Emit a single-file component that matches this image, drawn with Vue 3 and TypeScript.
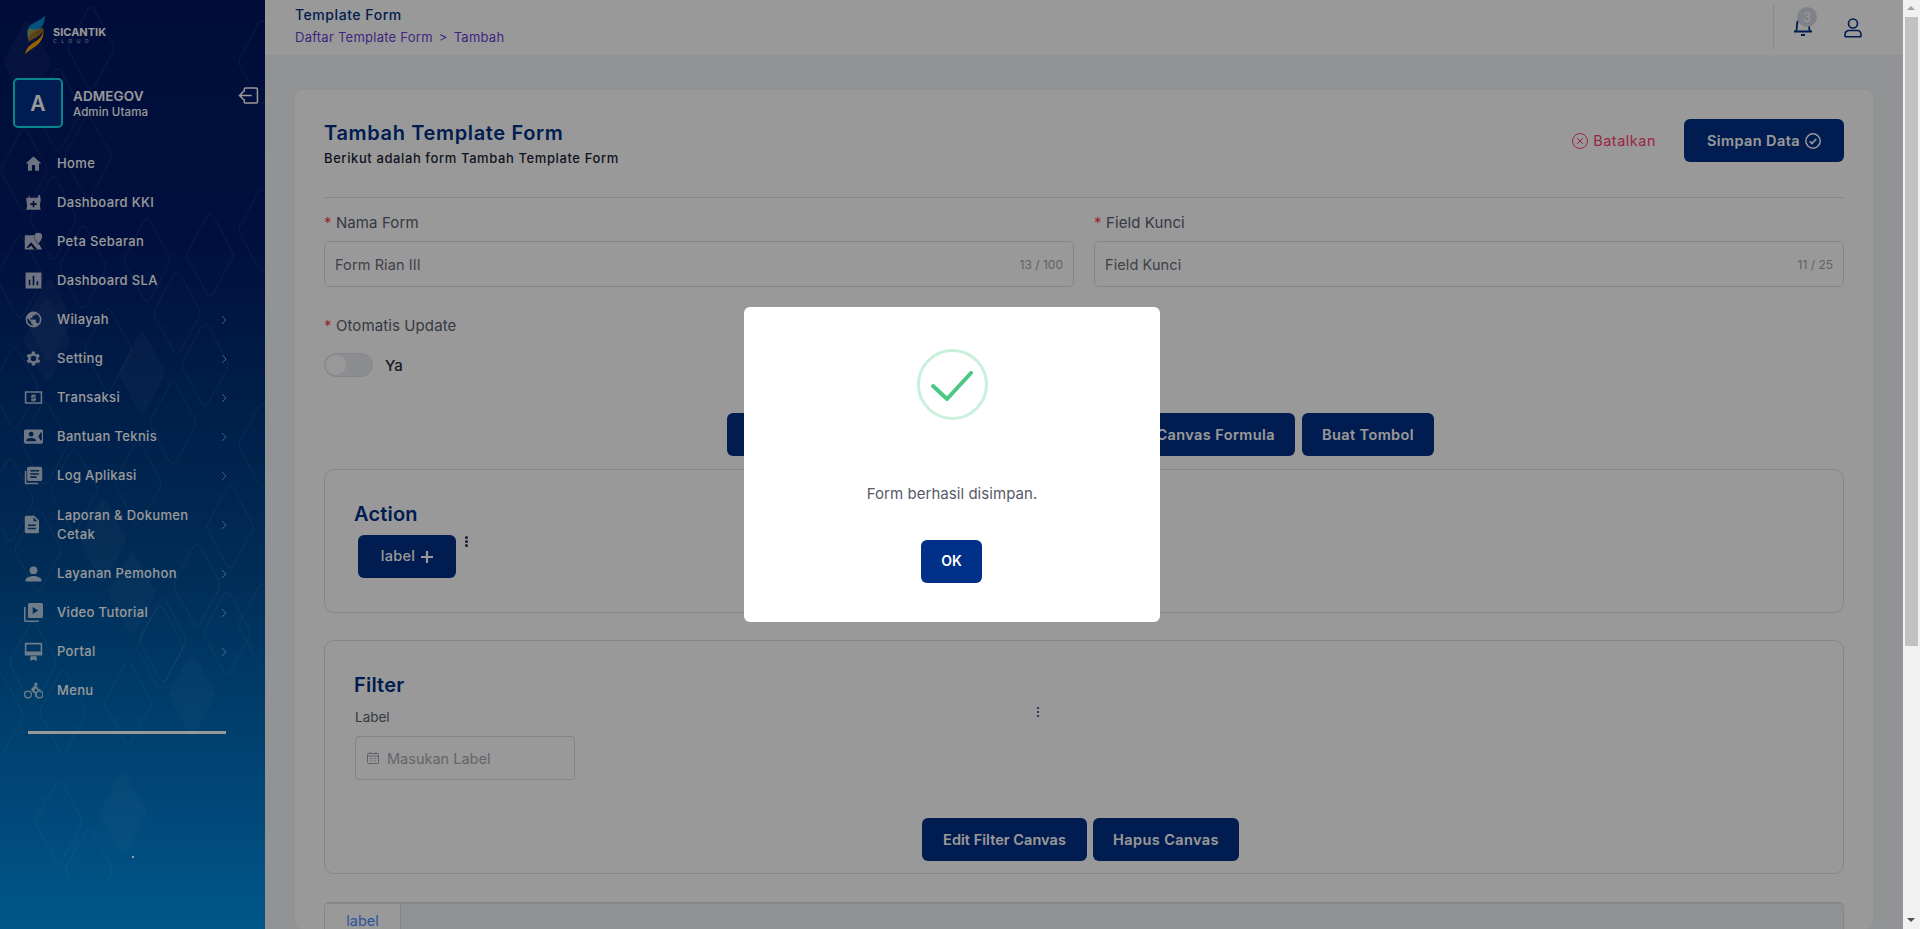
<script setup lang="ts">
interface MenuItem {
  label: string;
  icon: string;
  arrow?: boolean;
}

const menu: MenuItem[] = [
  { label: "Home", icon: "home" },
  { label: "Dashboard KKI", icon: "kki" },
  { label: "Peta Sebaran", icon: "map" },
  { label: "Dashboard SLA", icon: "chart" },
  { label: "Wilayah", icon: "globe", arrow: true },
  { label: "Setting", icon: "gear", arrow: true },
  { label: "Transaksi", icon: "money", arrow: true },
  { label: "Bantuan Teknis", icon: "contact", arrow: true },
  { label: "Log Aplikasi", icon: "news", arrow: true },
  { label: "Laporan & Dokumen Cetak", icon: "doc", arrow: true },
  { label: "Layanan Pemohon", icon: "person", arrow: true },
  { label: "Video Tutorial", icon: "video", arrow: true },
  { label: "Portal", icon: "monitor", arrow: true },
  { label: "Menu", icon: "bike" },
];

// pola belah ketupat di sidebar: [x tengah, y tengah, isi]
const diamonds: [number, number, boolean][] = [
  [91, 48, false], [27, 62, true], [58, 110, false], [88, 157, false], [24, 170, false],
  [53, 218, false], [210, 255, false], [147, 260, false], [83, 267, false], [20, 277, false],
  [177, 313, false], [49, 320, true], [47, 340, true], [142, 373, true], [205, 365, false],
  [15, 388, false], [173, 423, false], [45, 443, false], [108, 350, false], [74, 490, false],
  [138, 483, false], [10, 500, false], [230, 527, false], [103, 540, true], [38, 550, false],
  [197, 585, false], [132, 593, true], [163, 640, false], [227, 633, false], [33, 663, false],
  [128, 703, false], [63, 712, false], [192, 695, true], [160, 647, false], [0, 715, false],
  [59, 822, false], [123, 813, true], [89, 870, false], [262, 62, false], [262, 230, false],
  [262, 445, false], [262, 625, false],
];

function diamondPath(cx: number, cy: number): string {
  return `M${cx - 3} ${cy - 39}Q${cx} ${cy - 43} ${cx + 3} ${cy - 39}L${cx + 22} ${cy - 4}Q${cx + 24} ${cy} ${cx + 22} ${cy + 4}L${cx + 3} ${cy + 39}Q${cx} ${cy + 43} ${cx - 3} ${cy + 39}L${cx - 22} ${cy + 4}Q${cx - 24} ${cy} ${cx - 22} ${cy - 4}Z`;
}
</script>

<template>
  <div class="page">
    <aside class="sidebar">
      <svg class="pattern" width="265" height="880" viewBox="0 0 265 880">
        <path
          v-for="(d, i) in diamonds"
          :key="i"
          :d="diamondPath(d[0], d[1])"
          :fill="d[2] ? 'rgba(255,255,255,0.04)' : 'none'"
          :stroke="d[2] ? 'none' : 'rgba(255,255,255,0.09)'"
        />
      </svg>

      <div class="logo">
        <svg width="21" height="40" viewBox="0 0 22 41">
          <path d="M21 0C17 5 8 7 4 12C1 16 2 21 4 25C4 20 8 18 14 15C19 12 21 6 21 0Z" fill="#0a87c9" />
          <path d="M19 14C19 19 18 22 13 26C9 29 2 31 0 41C4 36 10 34 14 30C19 25 20 19 19 14Z" fill="#f7a600" />
          <path d="M5 13C9 17 13 14 19 13C20 17 17 20 12 23C8 25 5 26 4 28C3 23 2 18 5 13Z" fill="#f7a600" opacity="0.6" />
        </svg>
        <div class="logo-text">
          <div class="logo-name">SICANTIK</div>
          <div class="logo-sub">CLOUD</div>
        </div>
      </div>

      <div class="user">
        <div class="avatar">A</div>
        <div class="user-info">
          <div class="user-name">ADMEGOV</div>
          <div class="user-role">Admin Utama</div>
        </div>
        <svg class="logout" width="22" height="17" viewBox="0 0 22 18" fill="none" stroke="#fff" stroke-width="1.6">
          <path d="M7 5V2.5A1.5 1.5 0 0 1 8.5 1H19.5A1.5 1.5 0 0 1 21 2.500V15.500A1.500 1.500 0 0 1 19.500 17H8.500A1.500 1.500 0 0 1 7 15.500V13" />
          <path d="M15 9H2M6.500 4.500L2 9L6.500 13.500" />
        </svg>
      </div>

      <nav class="menu">
        <div v-for="item in menu" :key="item.label" class="menu-item">
          <svg class="menu-icon" width="20" height="20" viewBox="0 0 24 24" fill="#fff">
            <path v-if="item.icon === 'home'" d="M10 21v-7h4v7h5v-9h3L12 3 2 12h3v9z" />
            <template v-else-if="item.icon === 'kki'">
              <path d="M3 6h3V3h1v3h10l2-4 1.500 1L20 6h1v4l-1 5 1 6H3l1-6-1-5z" />
              <path d="M11 10h2v3h3v2h-3v3h-2v-3H8v-2h3z" fill="#00124a" />
            </template>
            <template v-else-if="item.icon === 'map'">
              <path d="M1 4h12v3c0 3 3 6 5 9l1-1 4 7H1z" />
              <path d="M18 1a5 5 0 0 1 5 5c0 3-3 6-5 9-2-3-5-6-5-9a5 5 0 0 1 5-5z" />
              <path d="M3 20l6-7 8 9H13l-4-5-3 3z" fill="#00124a" />
            </template>
            <path v-else-if="item.icon === 'chart'" fill-rule="evenodd" d="M2 2h20v20H2zM6 11v7h2v-7zM11 6v12h2V6zM16 13v5h2v-5z" />
            <path v-else-if="item.icon === 'globe'" fill-rule="evenodd" d="M12 2a10 10 0 1 0 0 20 10 10 0 0 0 0-20zM11 19.900A8 8 0 0 1 4.200 10.200L9 15v1a2 2 0 0 0 2 2zM17.900 17.400A2 2 0 0 0 16 16h-1v-3a1 1 0 0 0-1-1H8v-2h2a1 1 0 0 0 1-1V7h2a2 2 0 0 0 2-2v-.4a8 8 0 0 1 2.900 12.800z" />
            <path v-else-if="item.icon === 'gear'" fill-rule="evenodd" d="M19.400 13a7.500 7.500 0 0 0 0-2l2.100-1.600-2-3.500-2.500 1a7.500 7.500 0 0 0-1.700-1L15.500 3.200h-4L11 5.900a7.500 7.500 0 0 0-1.700 1l-2.500-1-2 3.500L6.900 11a7.500 7.500 0 0 0 0 2l-2.100 1.600 2 3.500 2.500-1a7.500 7.500 0 0 0 1.700 1l.5 2.700h4l.5-2.700a7.500 7.500 0 0 0 1.700-1l2.500 1 2-3.500zM13.500 15.500a3.500 3.500 0 1 1 0-7 3.500 3.500 0 0 1 0 7z" transform="translate(-1.500 0)" />
            <path v-else-if="item.icon === 'money'" fill-rule="evenodd" d="M1 4h22v16H1zM3 6v12h18V6zM11 8h2v1h2v2h-4v1h3a1 1 0 0 1 1 1v2a1 1 0 0 1-1 1h-1v1h-2v-1H9v-2h4v-1h-3a1 1 0 0 1-1-1v-2a1 1 0 0 1 1-1h1z" />
            <path v-else-if="item.icon === 'contact'" fill-rule="evenodd" d="M2 3h20a2 2 0 0 1 2 2v14a2 2 0 0 1-2 2H2a2 2 0 0 1-2-2V5a2 2 0 0 1 2-2zM9 6a3 3 0 1 0 0 6 3 3 0 0 0 0-6zM3 18h12v-1c0-2-4-3-6-3s-6 1-6 3zM21 7l-3 5 3 5h1.500V7z" />
            <template v-else-if="item.icon === 'news'">
              <path fill-rule="evenodd" d="M6 1h15a2 2 0 0 1 2 2v14a2 2 0 0 1-2 2H6a2 2 0 0 1-2-2V3a2 2 0 0 1 2-2zM8 5v2h11V5zM8 9v2h11V9zM8 13v2h8v-2z" />
              <path d="M1 6h2v15h15v2H3a2 2 0 0 1-2-2z" />
            </template>
            <path v-else-if="item.icon === 'doc'" fill-rule="evenodd" d="M6 1h9l6 6v14a2 2 0 0 1-2 2H5a2 2 0 0 1-2-2V3a2 2 0 0 1 2-2zM7 12v2h10v-2zM7 16v2h10v-2zM14 3v5h5z" transform="translate(-2 0)" />
            <path v-else-if="item.icon === 'person'" d="M12 3a5 5 0 1 1 0 10 5 5 0 0 1 0-10zM12 15c4 0 10 2 10 5v2H2v-2c0-3 6-5 10-5z" />
            <template v-else-if="item.icon === 'video'">
              <path fill-rule="evenodd" d="M7 0h15a2 2 0 0 1 2 2v15a2 2 0 0 1-2 2H7a2 2 0 0 1-2-2V2a2 2 0 0 1 2-2zM11 5v9l7-4.500z" />
              <path d="M0 5h2v17h17v2H2a2 2 0 0 1-2-2z" />
            </template>
            <template v-else-if="item.icon === 'monitor'">
              <path fill-rule="evenodd" d="M1 1h22v16H1zM3 3v9h18V3z" />
              <path d="M8 18h8v6l-4-2-4 2z" />
            </template>
            <template v-else-if="item.icon === 'bike'">
              <circle cx="15" cy="4" r="2" />
              <path d="M9 10l4-4h3l2 4h3v2h-4l-2-3-2 3 3 3v5h-2v-4l-4-3z" />
              <circle cx="5" cy="17" r="4.300" fill="none" stroke="#fff" stroke-width="1.600" />
              <circle cx="19.500" cy="17" r="4.300" fill="none" stroke="#fff" stroke-width="1.600" />
            </template>
          </svg>
          <span class="menu-label">{{ item.label }}</span>
          <svg v-if="item.arrow" class="menu-arrow" width="6" height="10" viewBox="0 0 6 10" fill="none" stroke="#fff" stroke-width="1">
            <path d="M1 1l4 4-4 4" />
          </svg>
        </div>
      </nav>
      <div class="side-line"></div>
      <div class="side-dot"></div>
    </aside>

    <div class="main">
      <header class="topbar">
        <div class="crumbs">
          <div class="crumb-title">Template Form</div>
          <div class="crumb-path">Daftar Template Form<span class="sep">&gt;</span>Tambah</div>
        </div>
        <div class="top-actions">
          <div class="bell">
            <svg width="20" height="24" viewBox="0 0 20 24" fill="none" stroke="#003087" stroke-width="1.800">
              <path d="M1 18.500h18M3 18.500c1-2 1-4 1-7a6 6 0 0 1 12 0c0 3 0 5 1 7" />
              <path d="M8 22h4" stroke-width="2" />
            </svg>
            <span class="badge">3</span>
          </div>
          <svg width="18" height="20" viewBox="0 0 18 20" fill="none" stroke="#003087" stroke-width="1.600">
            <circle cx="9" cy="5.500" r="4.500" />
            <path d="M1 18v-1.500a4 4 0 0 1 4-4h8a4 4 0 0 1 4 4V18a.8.8 0 0 1-.8.8H1.800A.8.8 0 0 1 1 18z" />
          </svg>
        </div>
      </header>

      <main class="content">
        <section class="card">
          <div class="card-head">
            <div>
              <h1 class="card-title">Tambah Template Form</h1>
              <div class="card-sub">Berikut adalah form Tambah Template Form</div>
            </div>
            <div class="head-actions">
              <span class="cancel">
                <svg width="16" height="16" viewBox="0 0 16 16" fill="none" stroke="#ff3d71" stroke-width="1">
                  <circle cx="8" cy="8" r="7.500" />
                  <path d="M5 5l6 6M11 5l-6 6" />
                </svg>
                Batalkan
              </span>
              <button class="btn btn-save">
                Simpan Data
                <svg width="16" height="16" viewBox="0 0 16 16" fill="none" stroke="#fff" stroke-width="1.500">
                  <circle cx="8" cy="8" r="7.200" />
                  <path d="M4.800 8.300l2.200 2.200 4.200-4.500" stroke-width="1.700" />
                </svg>
              </button>
            </div>
          </div>

          <div class="form-grid">
            <div class="field">
              <label class="label"><i>*</i> Nama Form</label>
              <div class="input">
                <span class="value">Form Rian III</span>
                <span class="count">13 / 100</span>
              </div>
            </div>
            <div class="field">
              <label class="label"><i>*</i> Field Kunci</label>
              <div class="input">
                <span class="value">Field Kunci</span>
                <span class="count">11 / 25</span>
              </div>
            </div>
          </div>

          <div class="field auto">
            <label class="label"><i>*</i> Otomatis Update</label>
            <div class="switch-row">
              <span class="switch"><span class="knob"></span></span>
              <span class="switch-text">Ya</span>
            </div>
          </div>

          <div class="canvas-btns">
            <button class="btn w-form">Edit Canvas Form</button>
            <button class="btn w-action">Edit Action Canvas</button>
            <button class="btn w-formula">Edit Canvas Formula</button>
            <button class="btn w-tombol">Buat Tombol</button>
          </div>

          <div class="panel panel-action">
            <h2 class="panel-title">Action</h2>
            <div class="action-row">
              <button class="btn btn-label">
                <span class="label-text">label</span>
                <svg width="12" height="12" viewBox="0 0 12 12" stroke="#fff" stroke-width="2.200"><path d="M6 0v12M0 6h12" /></svg>
              </button>
              <span class="dots"><b></b><b></b><b></b></span>
            </div>
          </div>

          <div class="panel panel-filter">
            <h2 class="panel-title">Filter</h2>
            <div class="filter-row">
              <div class="filter-field">
                <div class="filter-label">Label</div>
                <div class="date-input">
                  <svg width="12" height="12" viewBox="0 0 12 12" fill="none" stroke="#8a8f9c" stroke-width="0.800">
                    <rect x="0.500" y="1.500" width="11" height="10" rx="1" />
                    <path d="M0.500 4h11M3 0v2M9 0v2M3 6.500h1M5.500 6.500h1M8 6.500h1M3 8.800h1M5.500 8.800h1M8 8.800h1" />
                  </svg>
                  Masukan Label
                </div>
              </div>
              <span class="dots dots-small"><b></b><b></b><b></b></span>
            </div>
            <div class="filter-btns">
              <button class="btn w-filter">Edit Filter Canvas</button>
              <button class="btn w-hapus">Hapus Canvas</button>
            </div>
          </div>

          <div class="tabs">
            <span class="tab">label</span>
          </div>
        </section>
      </main>
    </div>

    <div class="overlay">
      <div class="dialog">
        <div class="success">
          <svg width="42" height="30" viewBox="0 0 42 30" fill="none" stroke="#4cc784" stroke-width="4" stroke-linecap="round" stroke-linejoin="round">
            <path d="M2 15l14 13L40 2" />
          </svg>
        </div>
        <div class="dialog-text">Form berhasil disimpan.</div>
        <button class="btn-ok">OK</button>
      </div>
    </div>

    <div class="scrollbar">
      <span class="sb-up"></span>
      <span class="sb-thumb"></span>
      <span class="sb-down"></span>
    </div>
  </div>
</template>

<style>
html,
body {
  margin: 0;
  overflow: hidden;
}
</style>

<style scoped>
.page {
  display: flex;
  width: 1920px;
  height: 929px;
  overflow: hidden;
  position: relative;
  font-family: Inter, "Liberation Sans", sans-serif;
  background: #f2f5f7;
}
.sidebar {
  width: 265px;
  flex: none;
  height: 929px;
  position: relative;
  box-sizing: border-box;
  padding: 14px 0 0 13px;
  background: linear-gradient(180deg, #001762 0%, #001a66 25%, #00498f 60%, #0091e6 100%);
  color: #fff;
}
.pattern {
  position: absolute;
  left: 0;
  top: 0;
}
.logo {
  display: flex;
  align-items: center;
  gap: 7px;
  margin-left: 12px;
  height: 41px;
  position: relative;
}
.logo-text {
  margin-top: 1px;
}
.logo-name {
  font-size: 11px;
  font-weight: 700;
  line-height: 12px;
}
.logo-sub {
  font-size: 5px;
  letter-spacing: 4.500px;
  line-height: 7px;
  opacity: 0.7;
}
.user {
  display: flex;
  align-items: center;
  margin-top: 23px;
  position: relative;
}
.avatar {
  width: 46px;
  height: 46px;
  border: 2px solid #10e0e8;
  border-radius: 5px;
  background: #003087;
  display: flex;
  align-items: center;
  justify-content: center;
  font-size: 21px;
  font-weight: 600;
}
.user-info {
  margin-left: 10px;
  flex: 1;
}
.user-name {
  font-size: 13.500px;
  font-weight: 600;
  line-height: 17px;
  letter-spacing: 0.1px;
}
.user-role {
  font-size: 11.500px;
  font-weight: 500;
  line-height: 14px;
  letter-spacing: 0.1px;
}
.logout {
  position: absolute;
  left: 224px;
  top: 9px;
}
.menu {
  margin-top: 16px;
  position: relative;
}
.menu-item {
  display: flex;
  align-items: center;
  min-height: 39px;
  padding-left: 11px;
  box-sizing: border-box;
}
.menu-item:nth-child(10) {
  min-height: 59px;
}
.menu-icon {
  flex: none;
  opacity: 0.72;
  width: 19px;
  height: 19px;
}
.menu-label {
  margin-left: 14px;
  width: 145px;
  font-size: 13px;
  font-weight: 500;
  line-height: 19px;
  letter-spacing: 0.35px;
}
.menu-arrow {
  position: absolute;
  left: 208px;
  opacity: 0.5;
}
.side-line {
  position: absolute;
  left: 28px;
  top: 731px;
  width: 198px;
  height: 3px;
  background: #fff;
}
.side-dot {
  position: absolute;
  left: 132px;
  top: 856px;
  width: 2px;
  height: 2px;
  background: #fff;
}
.main {
  width: 1638px;
  flex: none;
}
.topbar {
  height: 55px;
  background: #fff;
  display: flex;
  justify-content: space-between;
  box-sizing: border-box;
  padding: 6px 0 0 30px;
}
.crumb-title {
  font-size: 14px;
  font-weight: 500;
  color: #003087;
  line-height: 18px;
  letter-spacing: 0.55px;
}
.crumb-path {
  font-size: 13px;
  color: #6a3fd6;
  line-height: 18px;
  margin-top: 4px;
  letter-spacing: 0.25px;
}
.sep {
  margin: 0 6px;
}
.top-actions {
  display: flex;
  align-items: center;
  gap: 31px;
  height: 45px;
  margin-top: -1px;
  padding: 0 41px 0 19px;
  border-left: 1px solid #e2e4e8;
}
.bell {
  position: relative;
  width: 20px;
  height: 24px;
  margin-top: -5px;
}
.badge {
  position: absolute;
  left: 4px;
  top: -6px;
  width: 20px;
  height: 20px;
  border-radius: 50%;
  background: #d5d9e4;
  color: #fff;
  font-size: 13px;
  text-align: center;
  line-height: 20px;
}
.content {
  padding: 35px 30px 0;
}
.card {
  background: #fff;
  border-radius: 8px;
  padding: 29px 29px 0;
  height: 839px;
  box-sizing: border-box;
  box-shadow: 0 0 12px rgba(0, 0, 0, 0.02);
}
.card-head {
  display: flex;
  justify-content: space-between;
  padding-bottom: 30px;
  border-bottom: 1px solid #dcdfe4;
}
.card-title {
  margin: 0;
  font-size: 20px;
  font-weight: 600;
  color: #003087;
  line-height: 28px;
  letter-spacing: 0.65px;
}
.card-sub {
  font-size: 13px;
  font-weight: 500;
  color: #1a1f36;
  line-height: 18px;
  margin-top: 2px;
  letter-spacing: 0.6px;
}
.head-actions {
  display: flex;
  align-items: flex-start;
  gap: 28px;
}
.cancel {
  display: flex;
  align-items: center;
  gap: 5px;
  height: 43px;
  color: #ff3d71;
  font-size: 14.500px;
  font-weight: 400;
  letter-spacing: 0.5px;
}
.btn {
  height: 43px;
  box-sizing: border-box;
  border: none;
  border-radius: 6px;
  background: #003087;
  color: #fff;
  font-family: inherit;
  font-size: 14.500px;
  font-weight: 600;
  letter-spacing: 0.4px;
  padding: 0;
  display: inline-flex;
  align-items: center;
  justify-content: center;
  flex: none;
}
.btn-save {
  width: 160px;
  gap: 5px;
}
.form-grid {
  display: grid;
  grid-template-columns: 1fr 1fr;
  gap: 20px;
  margin-top: 14px;
}
.label {
  display: block;
  font-size: 15px;
  color: #5a6070;
  line-height: 21px;
  margin-bottom: 8px;
  letter-spacing: 0.1px;
}
.label i {
  font-style: normal;
  color: #ff3d3d;
}
.input {
  height: 46px;
  box-sizing: border-box;
  border: 1px solid #d8dbe2;
  border-radius: 5px;
  display: flex;
  align-items: center;
  justify-content: space-between;
  padding: 0 10px;
}
.value {
  font-size: 14.500px;
  color: #6a6f7c;
  letter-spacing: 0.1px;
}
.count {
  font-size: 12px;
  color: #a0a4ae;
}
.auto {
  margin-top: 28px;
}
.switch-row {
  display: flex;
  align-items: center;
  gap: 12px;
  padding-top: 9px;
}
.switch {
  width: 49px;
  height: 24px;
  box-sizing: border-box;
  border-radius: 12px;
  background: #e8ebf2;
  border: 1px solid #e0e2e8;
  padding: 1px;
}
.knob {
  display: block;
  width: 20px;
  height: 20px;
  border-radius: 50%;
  background: #fff;
}
.switch-text {
  font-size: 15px;
  font-weight: 500;
  color: #2a2f3c;
}
.canvas-btns {
  display: flex;
  justify-content: center;
  gap: 7px;
  margin-top: 36px;
  padding-right: 7px;
}
.w-form {
  width: 175px;
}
.w-action {
  width: 188px;
}
.w-formula {
  width: 191px;
}
.w-tombol {
  width: 132px;
}
.panel {
  border: 1px solid #dcdfe4;
  border-radius: 10px;
  box-sizing: border-box;
  padding: 30px 29px 0;
}
.panel-action {
  height: 144px;
  margin-top: 13px;
}
.panel-title {
  margin: 0;
  font-size: 20px;
  font-weight: 600;
  color: #003087;
  line-height: 28px;
  letter-spacing: 0.2px;
}
.action-row {
  display: flex;
  align-items: flex-start;
  margin: 7px 0 0 4px;
}
.btn-label {
  width: 98px;
  gap: 6px;
  font-size: 14.500px;
  font-weight: 500;
  letter-spacing: 0.3px;
}
.label-text {
  margin-bottom: 3px;
}
.dots {
  display: flex;
  flex-direction: column;
  gap: 1px;
  margin: 1px 0 0 9px;
}
.dots b {
  width: 3px;
  height: 3px;
  border-radius: 50%;
  background: #2a2f4c;
}
.panel-filter {
  height: 234px;
  margin-top: 27px;
}
.filter-row {
  display: flex;
  align-items: flex-start;
  height: 119px;
}
.filter-field {
  margin-left: 1px;
  flex: none;
}
.filter-label {
  font-size: 13.500px;
  color: #5a6070;
  line-height: 20px;
  margin-top: 8px;
}
.date-input {
  width: 220px;
  height: 44px;
  box-sizing: border-box;
  margin-top: 9px;
  border: 1px solid #d8dbe2;
  border-radius: 4px;
  display: flex;
  align-items: center;
  gap: 8px;
  padding-left: 11px;
  font-size: 14.500px;
  color: #a6aab4;
}
.dots-small {
  margin: 8px 0 0 462px;
  gap: 2px;
}
.dots-small b {
  width: 2px;
  height: 2px;
  background: #003087;
}
.filter-btns {
  display: flex;
  justify-content: center;
  gap: 6px;
  padding-right: 7px;
}
.w-filter {
  width: 165px;
  letter-spacing: 0.05px;
}
.w-hapus {
  width: 146px;
}
.tabs {
  margin-top: 28px;
  height: 27px;
  box-sizing: border-box;
  background: #f2f3f6;
  border: 1px solid #dcdfe4;
  border-top-width: 2px;
  border-bottom: none;
  border-radius: 5px 5px 0 0;
}
.tab {
  display: block;
  width: 76px;
  height: 25px;
  box-sizing: border-box;
  padding-top: 9px;
  text-align: center;
  background: #fff;
  border-right: 1px solid #dcdfe4;
  color: #4a8eff;
  font-size: 14.500px;
  line-height: 16px;
}
.overlay {
  position: absolute;
  left: 0;
  top: 0;
  width: 1903px;
  height: 929px;
  background: rgba(0, 0, 0, 0.4);
}
.dialog {
  position: absolute;
  left: 744px;
  top: 307px;
  width: 416px;
  height: 315px;
  background: #fff;
  border-radius: 6px;
  display: flex;
  flex-direction: column;
  align-items: center;
}
.success {
  width: 71px;
  height: 71px;
  margin-top: 42px;
  box-sizing: border-box;
  border: 3px solid #c9f0dc;
  border-radius: 50%;
  display: flex;
  align-items: center;
  justify-content: center;
  padding-top: 3px;
}
.dialog-text {
  margin-top: 64px;
  font-size: 15px;
  color: #595968;
  line-height: 20px;
  letter-spacing: 0.05px;
}
.btn-ok {
  margin: 36px 1px 0 0;
  width: 61px;
  height: 43px;
  border: none;
  border-radius: 6px;
  background: #003087;
  color: #fff;
  font-family: inherit;
  font-size: 14px;
  font-weight: 600;
  padding-bottom: 3px;
}
.scrollbar {
  position: absolute;
  right: 0;
  top: 0;
  width: 17px;
  height: 929px;
  background: #f1f1f1;
  display: flex;
  flex-direction: column;
}
.sb-up,
.sb-down {
  height: 17px;
  flex: none;
  position: relative;
}
.sb-up::after,
.sb-down::after {
  content: "";
  position: absolute;
  left: 4px;
  top: 6px;
  border-left: 4px solid transparent;
  border-right: 4px solid transparent;
}
.sb-up::after {
  border-bottom: 4px solid #a3a3a3;
}
.sb-down::after {
  border-top: 4px solid #505050;
}
.sb-thumb {
  height: 629px;
  width: 13px;
  margin-left: 2px;
  background: #c1c1c1;
}
.sb-down {
  margin-top: auto;
}
</style>
